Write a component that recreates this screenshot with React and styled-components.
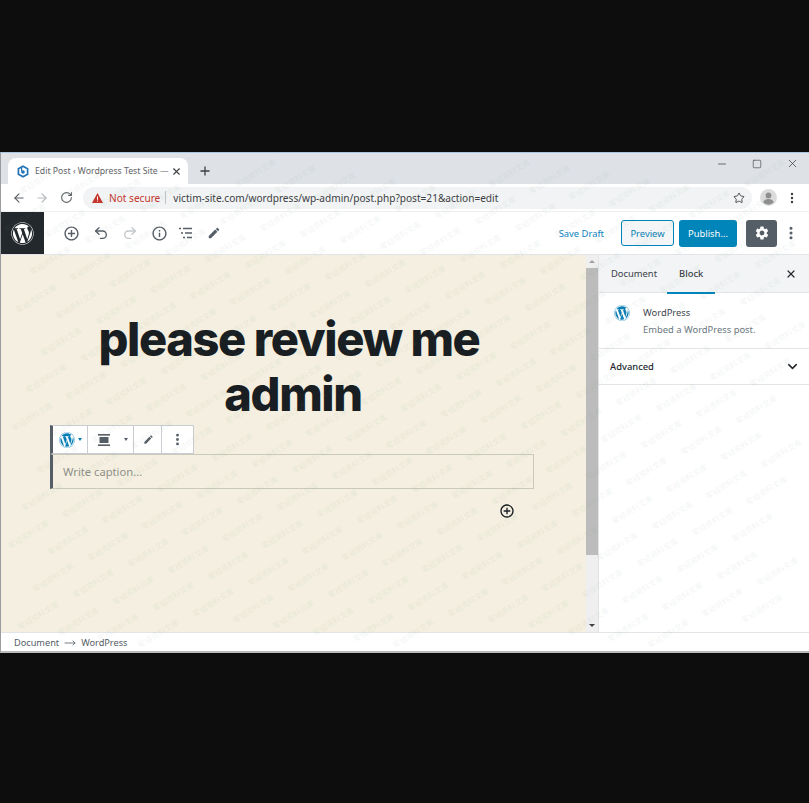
import styled, { createGlobalStyle } from "styled-components";
import { ArrowLeft, ArrowRight, RotateCw, Star, X, Plus, Minus, Square, MoreVertical, ChevronDown, Undo2, Redo2, MoveRight } from "lucide-react";
import { FaWordpress } from "react-icons/fa";
import { MdSettings, MdEdit, MdInfoOutline, MdAddCircleOutline } from "react-icons/md";

const GlobalStyle = createGlobalStyle`
  html, body {
    margin: 0;
    height: 100%;
    background: #0d0d0d;
  }
  body {
    font-family: "Noto Sans", "Open Sans", sans-serif;
  }
`;

const Page = styled.div`
  height: 803px;
  padding-top: 152px;
  box-sizing: border-box;
  overflow: hidden;
`;

const Window = styled.div`
  position: relative;
  display: flex;
  flex-direction: column;
  height: 501px;
  box-sizing: border-box;
  border-top: 1px solid #a9c6e3;
  border-left: 1px solid #9a9c9f;
  border-bottom: 2px solid #b9babc;
  background: #fff;
  overflow: hidden;
`;

const TabStrip = styled.div`
  display: flex;
  align-items: flex-end;
  height: 31px;
  padding-left: 7px;
  background: #dee1e6;
  flex: none;
`;

const Tab = styled.div`
  display: flex;
  align-items: center;
  width: 180px;
  height: 26px;
  box-sizing: border-box;
  padding: 0 6px 0 9px;
  background: #fff;
  border-radius: 8px 8px 0 0;
  color: #5f6368;
  font-size: 8.7px;
`;

const TabTitle = styled.span`
  flex: 1;
  margin-left: 6px;
  white-space: nowrap;
`;

const NewTab = styled.div`
  display: flex;
  align-items: center;
  height: 26px;
  margin-left: 10px;
  color: #3c4043;
`;

const WinControls = styled.div`
  display: flex;
  align-items: center;
  gap: 24px;
  margin: 0 10px 0 auto;
  align-self: flex-start;
  padding-top: 4px;
  color: #34373b;
`;

const AddressRow = styled.div`
  display: flex;
  align-items: center;
  height: 27px;
  padding-left: 11px;
  flex: none;
  color: #5f6368;
`;

const NavIcon = styled.span`
  display: flex;
  width: 15px;
  margin-right: ${({ $gap }) => $gap || 0}px;
  color: ${({ $muted }) => ($muted ? "#b4b7ba" : "#5f6368")};
`;

const Omnibox = styled.div`
  display: flex;
  align-items: center;
  width: 669px;
  height: 22px;
  margin-left: 8px;
  padding: 0 7px 0 9px;
  box-sizing: border-box;
  border-radius: 11px;
  background: #f1f3f4;
  font-size: 10.1px;
`;

const Warning = styled.span`
  display: flex;
  align-items: center;
  gap: 6px;
  color: #c5352b;
`;

const Divider = styled.span`
  width: 1px;
  height: 13px;
  margin: 0 7px 0 5px;
  background: #bdc1c6;
`;

const Url = styled.span`
  flex: 1;
  color: #3c4043;
`;

const Avatar = styled.span`
  display: flex;
  margin-left: 8px;
`;

const ChromeMenu = styled.span`
  display: flex;
  margin-left: 8px;
  color: #3c4043;
`;

const EditorBar = styled.div`
  display: flex;
  align-items: center;
  height: 44px;
  flex: none;
  border-bottom: 1px solid #e2e4e7;
  border-top: 1px solid #f0f0f0;
  box-sizing: border-box;
  background: #fff;
`;

const LogoTile = styled.div`
  display: flex;
  align-items: center;
  justify-content: center;
  width: 43px;
  align-self: stretch;
  background: #23282d;
  color: #fff;
`;

const ToolIcons = styled.div`
  display: flex;
  align-items: center;
  gap: 13px;
  margin-left: 19px;
`;

const ToolIcon = styled.span`
  display: flex;
  margin-left: ${({ $nudge }) => $nudge || 0}px;
  color: ${({ $muted }) => ($muted ? "#c3c7ca" : "#555d66")};
`;

const EditorActions = styled.div`
  display: flex;
  align-items: center;
  margin-left: auto;
`;

const SaveDraft = styled.span`
  margin-right: 17px;
  color: #0a82bc;
  font-size: 9.4px;
`;

const PreviewButton = styled.span`
  display: flex;
  align-items: center;
  justify-content: center;
  width: 53px;
  height: 26px;
  box-sizing: border-box;
  border: 1px solid #0085ba;
  border-radius: 3px;
  background: #f3f5f6;
  color: #0a7fb5;
  font-size: 9.4px;
`;

const PublishButton = styled.span`
  display: flex;
  align-items: center;
  justify-content: center;
  width: 58px;
  height: 27px;
  margin-left: 5px;
  border-radius: 3px;
  background: #0085ba;
  color: #fff;
  font-size: 9.4px;
`;

const SettingsButton = styled.span`
  display: flex;
  align-items: center;
  justify-content: center;
  width: 31px;
  height: 27px;
  margin-left: 9px;
  border-radius: 3px;
  background: #555d66;
  color: #fff;
`;

const MoreButton = styled.span`
  display: flex;
  margin: 0 10px 0 6px;
  color: #555d66;
`;

const Workspace = styled.div`
  display: flex;
  flex: 1;
  min-height: 0;
`;

const Canvas = styled.div`
  flex: 1;
  display: flex;
  flex-direction: column;
  padding-top: 56px;
  background: #f4efe0;
`;

const PostTitle = styled.h1`
  width: 420px;
  margin: 0 0 0 78px;
  color: #191e23;
  font-family: Inter, "Liberation Sans", sans-serif;
  font-size: 47px;
  font-weight: 800;
  line-height: 55px;
  letter-spacing: -0.03em;
  text-align: center;
`;

const TitleLine = styled.span`
  display: block;
  padding-left: ${({ $nudge }) => $nudge || 0}px;
`;

const BlockToolbar = styled.div`
  display: flex;
  align-self: flex-start;
  height: 29px;
  margin: 4px 0 0 49px;
  box-sizing: border-box;
  border: 1px solid #c9cdd2;
  border-left: 3px solid #555d66;
  background: #fff;
`;

const ToolGroup = styled.div`
  display: flex;
  align-items: center;
  justify-content: center;
  box-sizing: border-box;
  gap: ${({ $gap }) => $gap || 0}px;
  width: ${({ $width }) => $width}px;
  padding-left: ${({ $pad }) => $pad || 0}px;
  border-right: ${({ $last }) => ($last ? "none" : "1px solid #c9cdd2")};
  color: #555d66;
`;

const Caret = styled.span`
  width: 0;
  height: 0;
  border: 2.5px solid transparent;
  border-top: 3px solid ${({ $color }) => $color};
  border-bottom: 0;
`;

const CaptionBox = styled.div`
  display: flex;
  align-items: center;
  width: 484px;
  height: 35px;
  margin-left: 49px;
  padding-left: 10px;
  box-sizing: border-box;
  border: 1px solid #c9cabb;
  border-left: 3px solid #555d66;
  color: #8f8f88;
  font-size: 11.2px;
`;

const InserterRow = styled.div`
  display: flex;
  margin: 14px 0 0 498px;
  color: #191e23;
`;

const Scrollbar = styled.div`
  display: flex;
  flex-direction: column;
  width: 12px;
  flex: none;
  background: #efefef;
`;

const ScrollArrow = styled.span`
  height: 13px;
  display: flex;
  align-items: center;
  justify-content: center;
  flex: none;
`;

const ScrollThumb = styled.div`
  height: 287px;
  background: #bcbcbc;
`;

const ScrollSpace = styled.div`
  flex: 1;
`;

const Triangle = styled.span`
  width: 0;
  height: 0;
  border-left: 3px solid transparent;
  border-right: 3px solid transparent;
  ${({ $up }) => ($up ? "border-bottom: 3px solid #a0a0a0;" : "border-top: 3px solid #404040;")}
`;

const Sidebar = styled.aside`
  width: 211px;
  flex: none;
  border-left: 1px solid #e2e4e7;
  box-sizing: border-box;
  background: #fff;
`;

const SidebarTabs = styled.div`
  display: flex;
  align-items: stretch;
  height: 38px;
  padding-left: 12px;
  box-sizing: border-box;
  background: #f3f4f5;
  border-bottom: 1px solid #e2e4e7;
  font-size: 9.4px;
  color: #3a4047;
`;

const SidebarTab = styled.span`
  display: flex;
  align-items: center;
  margin-right: ${({ $gap }) => $gap}px;
  font-weight: ${({ $active }) => ($active ? 500 : 400)};
  box-shadow: ${({ $active }) => ($active ? "0 2px 0 #0085ba" : "none")};
  padding: ${({ $active }) => ($active ? "0 12px" : "0")};
`;

const SidebarClose = styled.span`
  display: flex;
  align-items: center;
  margin: 0 12px 0 auto;
  color: #23282d;
`;

const BlockCard = styled.div`
  display: flex;
  gap: 13px;
  height: 56px;
  padding: 12px 15px;
  box-sizing: border-box;
  border-bottom: 1px solid #e2e4e7;
`;

const BlockLogo = styled.span`
  display: flex;
  color: #0a7fb5;
`;

const BlockName = styled.div`
  color: #3f464d;
  font-size: 9.4px;
  line-height: 13px;
  margin-top: 1px;
`;

const BlockDesc = styled.div`
  margin-top: 4px;
  color: #6c7781;
  font-size: 9.4px;
  line-height: 13px;
`;

const PanelHeader = styled.div`
  display: flex;
  align-items: center;
  justify-content: space-between;
  height: 36px;
  padding: 0 9px 0 11px;
  box-sizing: border-box;
  border-bottom: 1px solid #e2e4e7;
  color: #23282d;
  font-size: 9.4px;
  font-weight: 500;
`;

const Breadcrumb = styled.div`
  display: flex;
  align-items: center;
  gap: 5px;
  height: 19px;
  flex: none;
  padding: 1px 0 0 13px;
  border-top: 1px solid #e2e4e7;
  box-sizing: border-box;
  color: #555d66;
  font-size: 9.2px;
`;

const Watermarks = styled.div`
  position: absolute;
  inset: 0;
  overflow: hidden;
  pointer-events: none;
`;

const Mark = styled.span`
  position: absolute;
  color: rgba(110, 150, 120, 0.08);
  font-family: "Noto Sans CJK SC", sans-serif;
  font-size: 7.8px;
  font-weight: 700;
  white-space: nowrap;
  transform: translate(-50%, -50%) rotate(-32deg);
`;

// lattice measured off the reference: a = (40, 6.2), b = (-14.7, 37.3)
const marks = [];
for (let r = -12; r < 16; r++) {
  for (let c = -24; c < 24; c++) {
    const x = 660 + c * 40 - r * 14.7;
    const y = 281 + c * 6.2 + r * 37.3;
    if (x > 24 && x < 785 && y > 15 && y < 484) marks.push({ x, y });
  }
}

function ListIcon() {
  return (
    <svg width="16" height="16" viewBox="0 0 16 16" fill="none" stroke="#555d66" strokeWidth="1.4">
      <path d="M1 3.5h2M5 3.5h9M3 8h2M7 8h7M5 12.5h2M9 12.5h5" />
    </svg>
  );
}

function AlignIcon() {
  return (
    <svg width="14" height="14" viewBox="0 0 14 14" fill="#555d66">
      <rect x="1" y="1" width="12" height="1.6" />
      <rect x="2.5" y="4" width="9" height="6" />
      <rect x="1" y="11.4" width="12" height="1.6" />
    </svg>
  );
}

function Favicon() {
  return (
    <svg width="12" height="13" viewBox="0 0 12 13" fill="none">
      <path d="M6 1.2 10.6 3.8v5.4L6 11.8 1.4 9.2V3.8z" stroke="#2474b5" strokeWidth="1.7" />
      <circle cx="6" cy="7" r="1.8" fill="#2474b5" />
      <path d="M4.6 1.5v5" stroke="#2474b5" strokeWidth="1.2" />
    </svg>
  );
}

function WarnIcon() {
  return (
    <svg width="11" height="10" viewBox="0 0 11 10">
      <path d="M5.5 0 11 10H0z" fill="#c5352b" />
      <rect x="5" y="3.4" width="1" height="3.4" fill="#fff" />
      <rect x="5" y="7.6" width="1" height="1" fill="#fff" />
    </svg>
  );
}

function PersonIcon() {
  return (
    <svg width="17" height="17" viewBox="0 0 17 17">
      <circle cx="8.5" cy="8.5" r="8.5" fill="#dcdcdc" />
      <circle cx="8.5" cy="6.4" r="2.9" fill="#8f8f8f" />
      <path d="M3.2 13.2c.8-2.4 3-3.2 5.3-3.2s4.5.8 5.3 3.2a7 7 0 0 1-10.6 0z" fill="#8f8f8f" />
    </svg>
  );
}

export default function App() {
  return (
    <>
      <GlobalStyle />
      <Page>
        <Window>
          <TabStrip>
            <Tab>
              <Favicon />
              <TabTitle>Edit Post ‹ Wordpress Test Site —</TabTitle>
              <X size={11} strokeWidth={2.4} color="#3c4043" />
            </Tab>
            <NewTab>
              <Plus size={14} strokeWidth={2.2} />
            </NewTab>
            <WinControls>
              <Minus size={12} strokeWidth={1.4} />
              <Square size={10} strokeWidth={1.4} />
              <X size={13} strokeWidth={1.3} />
            </WinControls>
          </TabStrip>
          <AddressRow>
            <NavIcon $gap={8}><ArrowLeft size={14} strokeWidth={2} /></NavIcon>
            <NavIcon $muted $gap={10}><ArrowRight size={14} strokeWidth={2} /></NavIcon>
            <NavIcon><RotateCw size={13} strokeWidth={2} /></NavIcon>
            <Omnibox>
              <Warning>
                <WarnIcon />
                Not secure
              </Warning>
              <Divider />
              <Url>victim-site.com/wordpress/wp-admin/post.php?post=21&amp;action=edit</Url>
              <Star size={12} strokeWidth={1.8} color="#3c4043" />
            </Omnibox>
            <Avatar><PersonIcon /></Avatar>
            <ChromeMenu><MoreVertical size={14} strokeWidth={2.2} /></ChromeMenu>
          </AddressRow>
          <EditorBar>
            <LogoTile><FaWordpress size={23} /></LogoTile>
            <ToolIcons>
              <ToolIcon><MdAddCircleOutline size={17} /></ToolIcon>
              <ToolIcon><Undo2 size={16} strokeWidth={2} /></ToolIcon>
              <ToolIcon $muted><Redo2 size={16} strokeWidth={2} /></ToolIcon>
              <ToolIcon><MdInfoOutline size={17} /></ToolIcon>
              <ToolIcon $nudge={-3}><ListIcon /></ToolIcon>
              <ToolIcon><MdEdit size={14} /></ToolIcon>
            </ToolIcons>
            <EditorActions>
              <SaveDraft>Save Draft</SaveDraft>
              <PreviewButton>Preview</PreviewButton>
              <PublishButton>Publish...</PublishButton>
              <SettingsButton><MdSettings size={16} /></SettingsButton>
              <MoreButton><MoreVertical size={16} strokeWidth={2.6} /></MoreButton>
            </EditorActions>
          </EditorBar>
          <Workspace>
            <Canvas>
              <PostTitle>
                <TitleLine>please review me</TitleLine>
                <TitleLine $nudge={8}>admin</TitleLine>
              </PostTitle>
              <BlockToolbar>
                <ToolGroup $width={35} $gap={3} $pad={1}>
                  <FaWordpress size={16} color="#0a7fb5" />
                  <Caret $color="#0a7fb5" />
                </ToolGroup>
                <ToolGroup $width={46} $gap={13} $pad={4}>
                  <AlignIcon />
                  <Caret $color="#555d66" />
                </ToolGroup>
                <ToolGroup $width={28} $pad={1}><MdEdit size={11} /></ToolGroup>
                <ToolGroup $width={31} $last><MoreVertical size={15} strokeWidth={2.6} /></ToolGroup>
              </BlockToolbar>
              <CaptionBox>Write caption...</CaptionBox>
              <InserterRow><MdAddCircleOutline size={16} /></InserterRow>
            </Canvas>
            <Scrollbar>
              <ScrollArrow><Triangle $up /></ScrollArrow>
              <ScrollThumb />
              <ScrollSpace />
              <ScrollArrow><Triangle /></ScrollArrow>
            </Scrollbar>
            <Sidebar>
              <SidebarTabs>
                <SidebarTab $gap={10}>Document</SidebarTab>
                <SidebarTab $active $gap={0}>Block</SidebarTab>
                <SidebarClose><X size={12} strokeWidth={2.4} /></SidebarClose>
              </SidebarTabs>
              <BlockCard>
                <BlockLogo><FaWordpress size={16} /></BlockLogo>
                <div>
                  <BlockName>WordPress</BlockName>
                  <BlockDesc>Embed a WordPress post.</BlockDesc>
                </div>
              </BlockCard>
              <PanelHeader>
                Advanced
                <ChevronDown size={15} strokeWidth={2.4} />
              </PanelHeader>
            </Sidebar>
          </Workspace>
          <Breadcrumb>
            <span>Document</span>
            <MoveRight size={12} strokeWidth={1.6} />
            <span>WordPress</span>
          </Breadcrumb>
          <Watermarks>
            {marks.map((m, i) => (
              <Mark key={i} style={{ left: m.x, top: m.y }}>零组资料文库</Mark>
            ))}
          </Watermarks>
        </Window>
      </Page>
    </>
  );
}
